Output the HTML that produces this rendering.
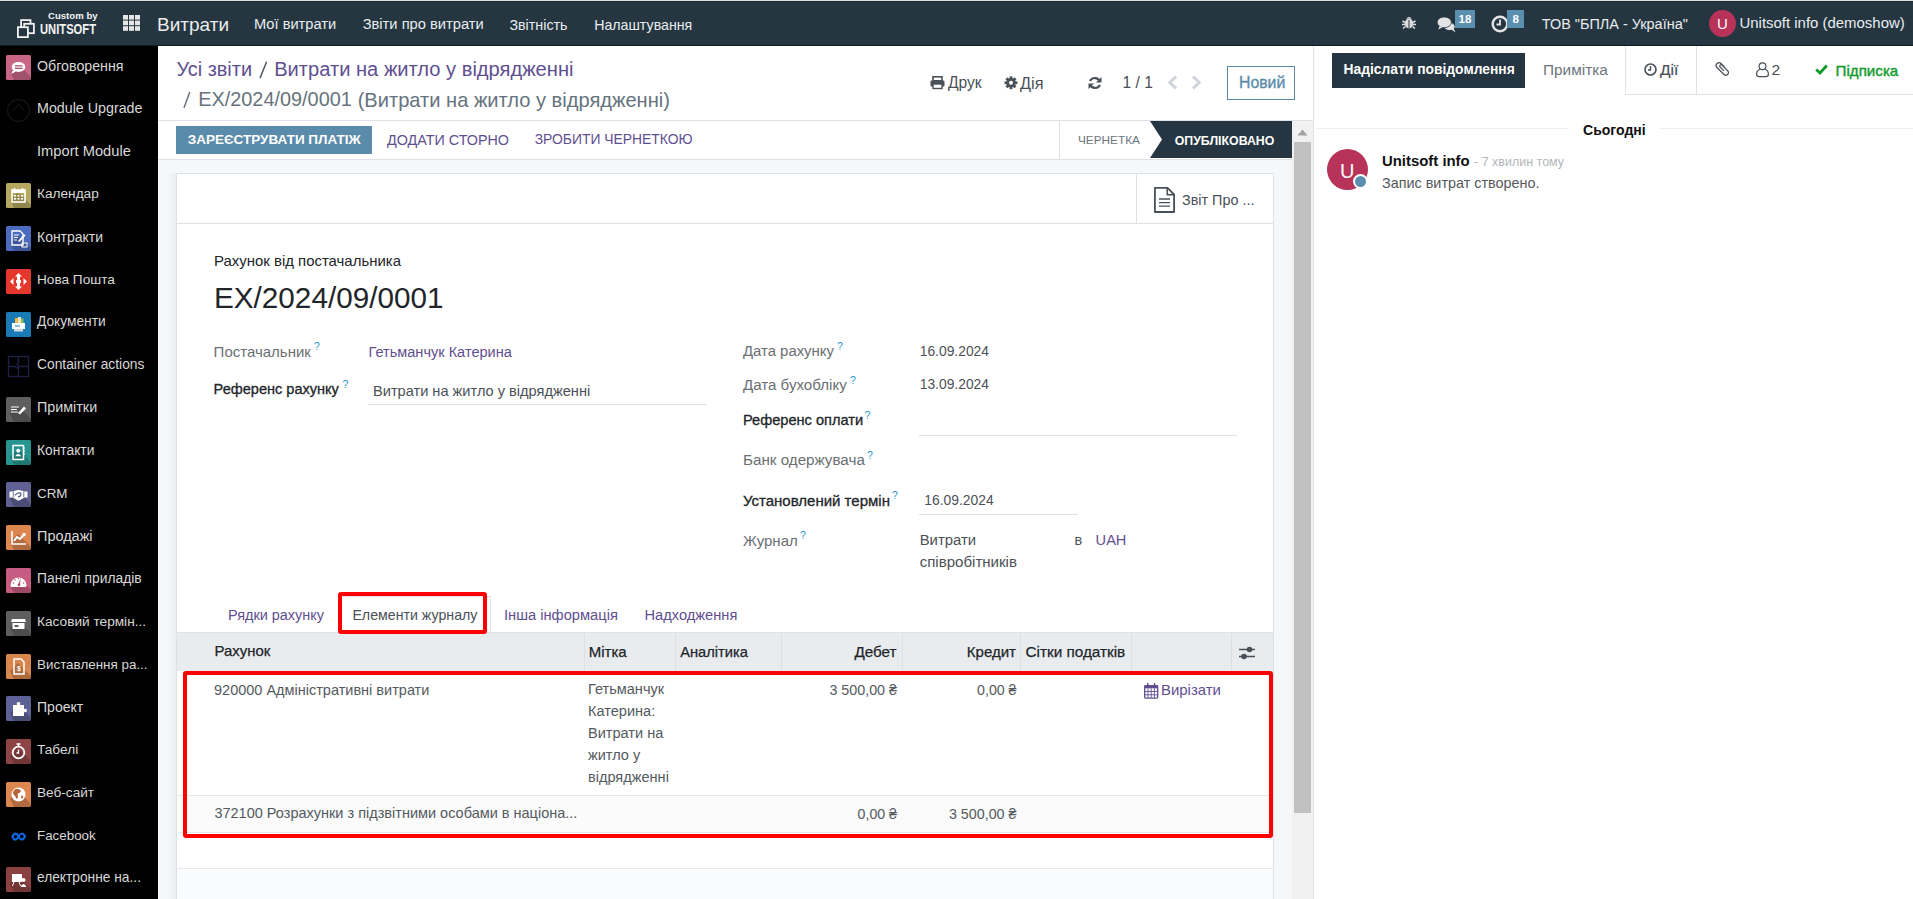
<!DOCTYPE html>
<html><head><meta charset="utf-8"><title>Витрати</title>
<style>
html,body{margin:0;padding:0;width:1913px;height:899px;overflow:hidden;background:#fff;}
body{position:relative;font-family:"Liberation Sans",sans-serif;}
.t{position:absolute;white-space:nowrap;line-height:1;}
.r{position:absolute;}
svg.r{display:block;overflow:visible;}
</style></head><body>
<div class="r" style="left:0px;top:0px;width:1913px;height:1px;background:#e0dfdd;"></div>
<div class="r" style="left:0px;top:1px;width:1913px;height:44px;background:#253641;"></div>
<div class="r" style="left:0px;top:1px;width:1913px;height:1px;background:#1c2c37;"></div>
<div class="r" style="left:0px;top:45px;width:1913px;height:1px;background:#111a20;"></div>
<div class="r" style="left:0px;top:46px;width:158px;height:853px;background:#000;"></div>
<div class="r" style="left:158px;top:46px;width:1155px;height:853px;background:#fff;"></div>
<div class="r" style="left:158px;top:120px;width:1155px;height:1px;background:#dee2e6;"></div>
<div class="r" style="left:158px;top:159px;width:1134px;height:1px;background:#dee2e6;"></div>
<div class="r" style="left:158px;top:160px;width:1134px;height:739px;background:#f6f7f9;"></div>
<div class="r" style="left:176px;top:173px;width:1098px;height:726px;background:#fff;border:1px solid #dee2e6;border-bottom:none;box-sizing:border-box;"></div>
<div class="r" style="left:166px;top:173px;width:10px;height:726px;background:linear-gradient(to right, rgba(0,0,0,0), rgba(0,0,0,0.035));"></div>
<div class="r" style="left:1292px;top:121px;width:21px;height:778px;background:#f1f1f1;"></div>
<div class="r" style="left:1294px;top:142px;width:17px;height:671px;background:#c1c1c1;"></div>
<svg class="r" style="left:1297px;top:129px;" width="11" height="7" viewBox="0 0 11 7"><path d="M0.5 6.5 L5.5 0.5 L10.5 6.5 Z" fill="#a3a3a3"/></svg>
<div class="r" style="left:1313px;top:46px;width:1px;height:853px;background:#dee2e6;"></div>
<div class="r" style="left:1314px;top:46px;width:599px;height:853px;background:#fff;"></div>
<svg class="r" style="left:16px;top:18px;" width="21" height="21" viewBox="0 0 21 21"><rect x="5.1" y="2.1" width="9.4" height="9.4" fill="#253541" stroke="#f2f2f2" stroke-width="1.8"/><rect x="8.2" y="5.8" width="9.7" height="9.4" fill="#253541" stroke="#f2f2f2" stroke-width="1.8"/><rect x="1.9" y="9.2" width="10" height="9.9" fill="#253541" stroke="#f2f2f2" stroke-width="1.8"/></svg>
<div class="t " style="top:10.87px;font-size:9.6px;color:#f4f4f4;font-weight:700;left:48.00px;">Custom by</div>
<div class="t " style="top:22.15px;font-size:14px;color:#f4f4f4;font-weight:700;left:40.00px;transform:scaleX(0.8);transform-origin:left top;">UNITSOFT</div>
<svg class="r" style="left:123px;top:15px;" width="17" height="16" viewBox="0 0 17 16"><rect x="0" y="0.0" width="5" height="4.6" fill="#e6e6e6"/><rect x="6" y="0.0" width="5" height="4.6" fill="#e6e6e6"/><rect x="12" y="0.0" width="5" height="4.6" fill="#e6e6e6"/><rect x="0" y="5.6" width="5" height="4.6" fill="#e6e6e6"/><rect x="6" y="5.6" width="5" height="4.6" fill="#e6e6e6"/><rect x="12" y="5.6" width="5" height="4.6" fill="#e6e6e6"/><rect x="0" y="11.2" width="5" height="4.6" fill="#e6e6e6"/><rect x="6" y="11.2" width="5" height="4.6" fill="#e6e6e6"/><rect x="12" y="11.2" width="5" height="4.6" fill="#e6e6e6"/></svg>
<div class="t " style="top:14.92px;font-size:19px;color:#ececec;left:157.00px;">Витрати</div>
<div class="t " style="top:17.40px;font-size:14.65px;color:#e9ecef;left:254.00px;">Мої витрати</div>
<div class="t " style="top:17.36px;font-size:14.7px;color:#e9ecef;left:362.70px;">Звіти про витрати</div>
<div class="t " style="top:17.70px;font-size:14.3px;color:#e9ecef;left:509.40px;">Звітність</div>
<div class="t " style="top:17.78px;font-size:14.2px;color:#e9ecef;left:594.20px;">Налаштування</div>
<svg class="r" style="left:1402px;top:15px;" width="14" height="14" viewBox="0 0 14 14"><ellipse cx="7" cy="8.5" rx="4.2" ry="5" fill="#dcdcdc"/><path d="M4 3.5 Q7 0.5 10 3.5 Z" fill="#dcdcdc"/><path d="M0.5 6 L3 7.5 M13.5 6 L11 7.5 M0 9.5 H3 M14 9.5 H11 M1 13.5 L3.5 11.5 M13 13.5 L10.5 11.5" stroke="#dcdcdc" stroke-width="1.6"/><path d="M7 5 V13.5" stroke="#253541" stroke-width="1"/></svg>
<svg class="r" style="left:1437px;top:16px;" width="19" height="17" viewBox="0 0 19 17"><ellipse cx="12.5" cy="10.5" rx="5.8" ry="4.3" fill="#e4e4e4" stroke="#253541" stroke-width="1.2"/><path d="M14.5 13.5 L18.5 16.5 L16.5 12 Z" fill="#e4e4e4"/><ellipse cx="7.3" cy="6.3" rx="7.1" ry="5.4" fill="#e4e4e4" stroke="#253541" stroke-width="0.8"/><path d="M2.5 10 L1.3 13.5 L6 11 Z" fill="#e4e4e4"/></svg>
<div class="r" style="left:1455px;top:9.5px;width:20px;height:18px;background:#5b8fb0;"></div>
<div class="t " style="top:13.77px;font-size:11.5px;color:#fff;font-weight:700;left:1458.50px;">18</div>
<svg class="r" style="left:1491px;top:15px;" width="18" height="18" viewBox="0 0 18 18"><circle cx="9" cy="9" r="7.3" fill="none" stroke="#e6e6e6" stroke-width="2.4"/><path d="M9 4.5 V9.5 H5.5" fill="none" stroke="#e6e6e6" stroke-width="1.8"/></svg>
<div class="r" style="left:1507px;top:9.5px;width:17px;height:18px;background:#5b8fb0;"></div>
<div class="t " style="top:13.77px;font-size:11.5px;color:#fff;font-weight:700;left:1512.50px;">8</div>
<div class="t " style="top:16.77px;font-size:14.45px;color:#e9ecef;left:1541.80px;">ТОВ "БПЛА - Україна"</div>
<div class="r" style="left:1709px;top:10px;width:27px;height:27px;background:#b7335a;border-radius:50%;"></div>
<div class="t " style="top:16.30px;font-size:15px;color:#fff;left:1717.00px;">U</div>
<div class="t " style="top:16.34px;font-size:14.95px;color:#e9ecef;left:1739.50px;">Unitsoft info (demoshow)</div>
<svg class="r" style="left:6px;top:55px;" width="25" height="25" viewBox="0 0 25 25"><rect width="25" height="25" rx="1.5" fill="#c96686"/><path d="M4 17 L12 9 L25 22 L25 25 L8 25 Z" fill="rgba(0,0,0,0.2)"/><ellipse cx="12.5" cy="12" rx="6.8" ry="5" fill="#fff"/><path d="M7 15 L5 19 L10 16.5 Z" fill="#fff"/><rect x="9" y="10.2" width="7.5" height="1.3" fill="#a3566f"/><rect x="9" y="12.7" width="7.5" height="1.3" fill="#a3566f"/></svg>
<div class="t " style="top:58.56px;font-size:14.22px;color:#d8d8d8;left:37.00px;">Обговорення</div>
<svg class="r" style="left:6px;top:98px;" width="25" height="25" viewBox="0 0 25 25"><circle cx="12.5" cy="12.5" r="11" fill="none" stroke="#121212" stroke-width="1.5"/><path d="M6 13 L12.5 6.5 L19 13" fill="none" stroke="#121212" stroke-width="1.2"/></svg>
<div class="t " style="top:101.26px;font-size:14.28px;color:#d8d8d8;left:37.00px;">Module Upgrade</div>
<div class="t " style="top:143.66px;font-size:14.7px;color:#d8d8d8;left:37.00px;">Import Module</div>
<svg class="r" style="left:6px;top:183px;" width="25" height="25" viewBox="0 0 25 25"><rect width="25" height="25" rx="1.5" fill="#b6a85e"/><path d="M4 17 L12 9 L25 22 L25 25 L8 25 Z" fill="rgba(0,0,0,0.2)"/><rect x="6" y="7" width="13" height="12" fill="none" stroke="#fff" stroke-width="1.6"/><rect x="6" y="7" width="13" height="3" fill="#fff"/><path d="M8.5 5 V8 M16.5 5 V8" stroke="#fff" stroke-width="1.5"/><g fill="#fff"><rect x="8" y="12" width="2" height="1.6"/><rect x="11.5" y="12" width="2" height="1.6"/><rect x="15" y="12" width="2" height="1.6"/><rect x="8" y="15" width="2" height="1.6"/><rect x="11.5" y="15" width="2" height="1.6"/><rect x="15" y="15" width="2" height="1.6"/></g></svg>
<div class="t " style="top:187.28px;font-size:13.67px;color:#d8d8d8;left:37.00px;">Календар</div>
<svg class="r" style="left:6px;top:226px;" width="25" height="25" viewBox="0 0 25 25"><rect width="25" height="25" rx="1.5" fill="#4b6bbf"/><path d="M4 17 L12 9 L25 22 L25 25 L8 25 Z" fill="rgba(0,0,0,0.2)"/><path d="M6 5 H14 L17 8 V19 H6 Z" fill="none" stroke="#fff" stroke-width="1.4"/><path d="M8 9 H13 M8 11.5 H12 M8 14 H11" stroke="#fff" stroke-width="1"/><path d="M12 15 L18 8 L19.5 9.5 L13.5 16 Z" fill="#fff"/><rect x="16" y="17" width="5" height="4" fill="none" stroke="#fff" stroke-width="1"/></svg>
<div class="t " style="top:229.77px;font-size:13.98px;color:#d8d8d8;left:37.00px;">Контракти</div>
<svg class="r" style="left:6px;top:269px;" width="25" height="25" viewBox="0 0 25 25"><rect width="25" height="25" rx="1.5" fill="#e5372c"/><path d="M12.5 4 L16 7.5 H14 V11 H11 V7.5 H9 Z M12.5 21 L9 17.5 H11 V14 H14 V17.5 H16 Z M4 12.5 L7.5 9 V16 Z M21 12.5 L17.5 9 V16 Z" fill="#fff"/><rect x="10" y="11" width="5" height="3" fill="#fff"/></svg>
<div class="t " style="top:272.80px;font-size:13.64px;color:#d8d8d8;left:37.00px;">Нова Пошта</div>
<svg class="r" style="left:6px;top:312px;" width="25" height="25" viewBox="0 0 25 25"><rect width="25" height="25" rx="1.5" fill="#1a7ab5"/><rect x="9" y="6" width="3" height="6" fill="#f4b942"/><rect x="12" y="5" width="3" height="7" fill="#e7e2d5"/><rect x="15" y="6.5" width="2.5" height="5.5" fill="#8bc34a"/><rect x="6" y="11" width="13" height="6" fill="#fff"/><rect x="8" y="17" width="9" height="2.5" fill="#cfd8dc"/><rect x="9" y="13.5" width="5" height="1" fill="#1a7ab5"/></svg>
<div class="t " style="top:315.45px;font-size:13.76px;color:#d8d8d8;left:37.00px;">Документи</div>
<svg class="r" style="left:6px;top:354px;" width="25" height="25" viewBox="0 0 25 25"><rect x="2.5" y="2.5" width="20" height="20" fill="none" stroke="#1d2044" stroke-width="1.4"/><path d="M12.5 2.5 V9 Q9.5 10 12.5 12.5 V22.5 M2.5 12.5 H9 Q10 15.5 12.5 12.5 H22.5" fill="none" stroke="#1d2044" stroke-width="1.4"/></svg>
<div class="t " style="top:358.16px;font-size:13.81px;color:#d8d8d8;left:37.00px;">Container actions</div>
<svg class="r" style="left:6px;top:397px;" width="25" height="25" viewBox="0 0 25 25"><rect width="25" height="25" rx="1.5" fill="#5f5f5f"/><path d="M4 17 L12 9 L25 22 L25 25 L8 25 Z" fill="rgba(0,0,0,0.2)"/><path d="M5 10 H13 M5 12.5 H11 M5 15 H12" stroke="#fff" stroke-width="1.2"/><path d="M12 16 L18 9.5 L20 11.5 L14 17.5 Z" fill="#fff"/></svg>
<div class="t " style="top:400.47px;font-size:14.33px;color:#d8d8d8;left:37.00px;">Примітки</div>
<svg class="r" style="left:6px;top:440px;" width="25" height="25" viewBox="0 0 25 25"><rect width="25" height="25" rx="1.5" fill="#27958f"/><path d="M4 17 L12 9 L25 22 L25 25 L8 25 Z" fill="rgba(0,0,0,0.2)"/><rect x="7" y="5.5" width="10.5" height="14" fill="none" stroke="#fff" stroke-width="1.5"/><circle cx="12.2" cy="10.8" r="2" fill="#fff"/><path d="M9 16.2 Q12.2 11.8 15.4 16.2 Z" fill="#fff"/><path d="M17 8 H19 M17 11 H19 M17 14 H19" stroke="#fff" stroke-width="1.1"/></svg>
<div class="t " style="top:443.66px;font-size:13.81px;color:#d8d8d8;left:37.00px;">Контакти</div>
<svg class="r" style="left:6px;top:482px;" width="25" height="25" viewBox="0 0 25 25"><rect width="25" height="25" rx="1.5" fill="#5e6192"/><path d="M4 17 L12 9 L25 22 L25 25 L8 25 Z" fill="rgba(0,0,0,0.2)"/><path d="M3.5 9.5 H7 L10.5 8.3 Q12.5 7.6 14.5 8.3 L18 9.5 H21.5 V15.5 H18.5 L13.8 18.3 Q12.3 19 11 18 L6.8 15.5 H3.5 Z" fill="#fff"/><path d="M9 13.3 Q11.5 9.8 14.8 11.2 Q15.5 14.5 12 14.8" fill="none" stroke="#5e6192" stroke-width="1.3"/><path d="M7.3 9.8 V15.2 M17.8 9.8 V15.2" stroke="#5e6192" stroke-width="0.9"/></svg>
<div class="t " style="top:486.75px;font-size:13.41px;color:#d8d8d8;left:37.00px;">CRM</div>
<svg class="r" style="left:6px;top:525px;" width="25" height="25" viewBox="0 0 25 25"><rect width="25" height="25" rx="1.5" fill="#de8650"/><path d="M4 17 L12 9 L25 22 L25 25 L8 25 Z" fill="rgba(0,0,0,0.2)"/><path d="M6 6 V19 H20" fill="none" stroke="#fff" stroke-width="1.6"/><path d="M8 16 L11 12 L14 14 L18.5 9" fill="none" stroke="#fff" stroke-width="2"/><path d="M16 8 H19.5 V11.5 Z" fill="#fff"/></svg>
<div class="t " style="top:528.60px;font-size:14.47px;color:#d8d8d8;left:37.00px;">Продажі</div>
<svg class="r" style="left:6px;top:568px;" width="25" height="25" viewBox="0 0 25 25"><rect width="25" height="25" rx="1.5" fill="#c85b82"/><path d="M4 17 L12 9 L25 22 L25 25 L8 25 Z" fill="rgba(0,0,0,0.2)"/><path d="M4.5 17.5 A8 8 0 0 1 20.5 17.5 Q20.5 19 19 19 H6 Q4.5 19 4.5 17.5 Z" fill="#fff"/><path d="M12 17.5 L14.8 9.5 L13.8 17.8 Z" fill="#a84a6a"/><circle cx="13" cy="17" r="1.3" fill="#a84a6a"/><g fill="#c85b82"><circle cx="7.5" cy="15" r="0.8"/><circle cx="9" cy="11.8" r="0.8"/><circle cx="12.5" cy="10.5" r="0.8"/><circle cx="17.5" cy="15" r="0.8"/></g></svg>
<div class="t " style="top:571.89px;font-size:13.83px;color:#d8d8d8;left:37.00px;">Панелі приладів</div>
<svg class="r" style="left:6px;top:611px;" width="25" height="25" viewBox="0 0 25 25"><rect width="25" height="25" rx="1.5" fill="#5f5f5f"/><path d="M4 17 L12 9 L25 22 L25 25 L8 25 Z" fill="rgba(0,0,0,0.2)"/><path d="M6 8 H19 L20 11 H5 Z" fill="#fff"/><rect x="6.5" y="12" width="12" height="6" fill="#fff"/><rect x="8.5" y="14" width="4" height="2" fill="#5f5f5f"/></svg>
<div class="t " style="top:614.79px;font-size:13.66px;color:#d8d8d8;left:37.00px;">Касовий термін...</div>
<svg class="r" style="left:6px;top:654px;" width="25" height="25" viewBox="0 0 25 25"><rect width="25" height="25" rx="1.5" fill="#d9864d"/><path d="M4 17 L12 9 L25 22 L25 25 L8 25 Z" fill="rgba(0,0,0,0.2)"/><path d="M8 5 H15 L18 8 V20 H8 Z" fill="none" stroke="#fff" stroke-width="1.5"/><text x="13" y="16.5" font-size="7" font-family="Liberation Sans" font-weight="700" fill="#fff" text-anchor="middle">$</text></svg>
<div class="t " style="top:657.75px;font-size:13.41px;color:#d8d8d8;left:37.00px;">Виставлення ра...</div>
<svg class="r" style="left:6px;top:696px;" width="25" height="25" viewBox="0 0 25 25"><rect width="25" height="25" rx="1.5" fill="#5c6295"/><path d="M4 17 L12 9 L25 22 L25 25 L8 25 Z" fill="rgba(0,0,0,0.2)"/><path d="M7 9 H11 Q10 6 12.5 6 Q15 6 14 9 H18 V13 Q21 12 21 14.5 Q21 17 18 16 V20 H7 Z" fill="#fff"/></svg>
<div class="t " style="top:699.97px;font-size:14.04px;color:#d8d8d8;left:37.00px;">Проект</div>
<svg class="r" style="left:6px;top:739px;" width="25" height="25" viewBox="0 0 25 25"><rect width="25" height="25" rx="1.5" fill="#8d4444"/><path d="M4 17 L12 9 L25 22 L25 25 L8 25 Z" fill="rgba(0,0,0,0.2)"/><circle cx="12.5" cy="13.5" r="5.8" fill="none" stroke="#fff" stroke-width="1.8"/><path d="M10.5 5 H14.5 M12.5 5 V7.5 M12.5 10.5 V14 H10.5" fill="none" stroke="#fff" stroke-width="1.4"/></svg>
<div class="t " style="top:743.01px;font-size:13.69px;color:#d8d8d8;left:37.00px;">Табелі</div>
<svg class="r" style="left:6px;top:782px;" width="25" height="25" viewBox="0 0 25 25"><rect width="25" height="25" rx="1.5" fill="#de8650"/><path d="M4 17 L12 9 L25 22 L25 25 L8 25 Z" fill="rgba(0,0,0,0.2)"/><circle cx="12.5" cy="12.5" r="7" fill="#fff"/><path d="M9.5 7 Q13 6.5 14.5 8 Q15.5 10 13 11 Q11 11.5 12 14 Q12.5 16 10.5 17 Q9.5 14 8 13 Q6 11 7.5 9 Z" fill="#b9653a"/><path d="M15.5 13 Q17.5 13.5 17 16 Q15.5 17.5 15 15.5 Z" fill="#b9653a"/></svg>
<div class="t " style="top:785.81px;font-size:13.63px;color:#d8d8d8;left:37.00px;">Веб-сайт</div>
<svg class="r" style="left:6px;top:824px;" width="25" height="25" viewBox="0 0 25 25"><path d="M6.5 13 Q9 6.5 12.5 12.5 Q16 18.5 19 12.5 Q16 6.5 12.5 12.5 Q9 18.5 6.5 13 Z" fill="none" stroke="#0a66e4" stroke-width="2.2"/></svg>
<div class="t " style="top:828.78px;font-size:13.37px;color:#d8d8d8;left:37.00px;">Facebook</div>
<svg class="r" style="left:6px;top:867px;" width="25" height="25" viewBox="0 0 25 25"><rect width="25" height="25" rx="1.5" fill="#8c4141"/><path d="M4 17 L12 9 L25 22 L25 25 L8 25 Z" fill="rgba(0,0,0,0.2)"/><rect x="6" y="7" width="10" height="8" fill="#fff"/><path d="M8 15 L6.5 19 M13 15 L14.5 19" stroke="#fff" stroke-width="1"/><circle cx="17.5" cy="13" r="2" fill="#fff"/><path d="M14.5 20 Q17.5 14 20.5 20 Z" fill="#fff"/></svg>
<div class="t " style="top:871.20px;font-size:13.76px;color:#d8d8d8;left:37.00px;">електронне на...</div>
<div class="t " style="top:59.93px;font-size:19.93px;color:#5f4f91;left:176.40px;">Усі звіти</div>
<svg class="r" style="left:255px;top:58px;" width="16" height="24" viewBox="0 0 16 24"><path d="M5.2 19.6 L11.4 4.2" stroke="#4f5a64" stroke-width="1.5" stroke-linecap="round"/></svg>
<div class="t " style="top:58.96px;font-size:20.13px;color:#5f4f91;left:274.20px;">Витрати на житло у відрядженні</div>
<svg class="r" style="left:180px;top:88px;" width="14" height="24" viewBox="0 0 14 24"><path d="M4.2 19.3 L9.6 4.6" stroke="#66737e" stroke-width="1.5" stroke-linecap="round"/></svg>
<div class="t " style="top:89.76px;font-size:19.89px;color:#66737e;left:198.20px;">EX/2024/09/0001</div>
<div class="t " style="top:89.59px;font-size:20.09px;color:#66737e;left:357.70px;">(Витрати на житло у відрядженні)</div>
<svg class="r" style="left:930px;top:76px;" width="15" height="13" viewBox="0 0 15 13"><rect x="3" y="0.8" width="9" height="4" fill="none" stroke="#495057" stroke-width="1.6"/><rect x="0.5" y="4.5" width="14" height="6" rx="1" fill="#495057"/><rect x="3" y="8" width="9" height="4.5" fill="#fff" stroke="#495057" stroke-width="1.4"/></svg>
<div class="t " style="top:75.29px;font-size:15.6px;color:#495057;left:948.00px;">Друк</div>
<svg class="r" style="left:1004px;top:76px;" width="14" height="14" viewBox="0 0 14 14"><g transform="translate(7 6.8)"><rect x="-1.4" y="-6.4" width="2.8" height="3" transform="rotate(0)" fill="#495057"/><rect x="-1.4" y="-6.4" width="2.8" height="3" transform="rotate(45)" fill="#495057"/><rect x="-1.4" y="-6.4" width="2.8" height="3" transform="rotate(90)" fill="#495057"/><rect x="-1.4" y="-6.4" width="2.8" height="3" transform="rotate(135)" fill="#495057"/><rect x="-1.4" y="-6.4" width="2.8" height="3" transform="rotate(180)" fill="#495057"/><rect x="-1.4" y="-6.4" width="2.8" height="3" transform="rotate(225)" fill="#495057"/><rect x="-1.4" y="-6.4" width="2.8" height="3" transform="rotate(270)" fill="#495057"/><rect x="-1.4" y="-6.4" width="2.8" height="3" transform="rotate(315)" fill="#495057"/><circle r="4.7" fill="#495057"/><circle r="2" fill="#fff"/></g></svg>
<div class="t " style="top:74.70px;font-size:16.3px;color:#495057;left:1020.00px;">Дія</div>
<svg class="r" style="left:1088px;top:76px;" width="14" height="14" viewBox="0 0 14 14"><path d="M12 5.5 A5.5 5.5 0 0 0 2 5" fill="none" stroke="#495057" stroke-width="2.2"/><path d="M13.5 1 V6.5 H8 Z" fill="#495057"/><path d="M2 8.5 A5.5 5.5 0 0 0 12 9" fill="none" stroke="#495057" stroke-width="2.2"/><path d="M0.5 13 V7.5 H6 Z" fill="#495057"/></svg>
<div class="t " style="top:74.99px;font-size:15.6px;color:#495057;left:1122.50px;">1 / 1</div>
<svg class="r" style="left:1167px;top:75px;" width="11" height="15" viewBox="0 0 11 15"><path d="M9 1.5 L2.8 7.5 L9 13.5" fill="none" stroke="#ced4da" stroke-width="3"/></svg>
<svg class="r" style="left:1191px;top:75px;" width="11" height="15" viewBox="0 0 11 15"><path d="M2 1.5 L8.2 7.5 L2 13.5" fill="none" stroke="#ced4da" stroke-width="3"/></svg>
<div class="r" style="left:1227px;top:66px;width:68px;height:34px;background:#fff;border:1px solid #5b8baa;box-sizing:border-box;"></div>
<div class="t " style="top:75.13px;font-size:15.8px;color:#5b8baa;left:1239.00px;-webkit-text-stroke:0.35px currentColor;">Новий</div>
<div class="r" style="left:176px;top:126px;width:196px;height:28px;background:#5b8baa;"></div>
<div class="t " style="top:133.27px;font-size:13.5px;color:#fff;font-weight:700;left:187.80px;">ЗАРЕЄСТРУВАТИ ПЛАТІЖ</div>
<div class="t " style="top:132.85px;font-size:14.35px;color:#5f4f91;left:387.00px;">ДОДАТИ СТОРНО</div>
<div class="t " style="top:133.23px;font-size:13.9px;color:#5f4f91;left:534.70px;">ЗРОБИТИ ЧЕРНЕТКОЮ</div>
<div class="r" style="left:1059px;top:121px;width:1px;height:38px;background:#dee2e6;"></div>
<div class="t " style="top:135.01px;font-size:11.8px;color:#6c757d;left:1078.00px;">ЧЕРНЕТКА</div>
<svg class="r" style="left:1150px;top:121px;" width="142" height="37" viewBox="0 0 142 37"><path d="M0 0 H142 V37 H0 L12 18.5 Z" fill="#253541"/></svg>
<div class="t " style="top:134.55px;font-size:12.35px;color:#fff;font-weight:700;left:1174.70px;">ОПУБЛІКОВАНО</div>
<div class="r" style="left:177px;top:223px;width:1096px;height:1px;background:#dee2e6;"></div>
<div class="r" style="left:1136px;top:174px;width:1px;height:49px;background:#dee2e6;"></div>
<svg class="r" style="left:1154px;top:187px;" width="21" height="26" viewBox="0 0 21 26"><path d="M0.9 0.9 H13.5 L20.1 7.5 V25 H0.9 Z" fill="none" stroke="#495057" stroke-width="1.8" stroke-linejoin="round"/><path d="M13.2 1 V7.8 H20" fill="none" stroke="#495057" stroke-width="1.5"/><path d="M5 12 H16 M5 15.6 H16 M5 19.2 H16" stroke="#495057" stroke-width="1.3"/></svg>
<div class="t " style="top:193.11px;font-size:14.4px;color:#495057;left:1182.00px;">Звіт Про ...</div>
<div class="t " style="top:254.34px;font-size:14.95px;color:#212529;left:214.00px;">Рахунок від постачальника</div>
<div class="t " style="top:283.16px;font-size:29.7px;color:#212529;left:214.00px;">EX/2024/09/0001</div>
<div class="t " style="top:343.70px;font-size:15.0px;color:#6b6f73;left:213.60px;">Постачальник</div>
<div class="t " style="top:340.61px;font-size:10.5px;color:#1f9bcf;left:314.00px;">?</div>
<div class="t " style="top:344.68px;font-size:14.55px;color:#5f4f91;left:368.50px;">Гетьманчук Катерина</div>
<div class="t " style="top:382.08px;font-size:14.55px;color:#212529;left:213.60px;-webkit-text-stroke:0.3px currentColor;">Референс рахунку</div>
<div class="t " style="top:378.61px;font-size:10.5px;color:#1f9bcf;left:342.50px;">?</div>
<div class="t " style="top:383.64px;font-size:14.6px;color:#4b5157;left:373.00px;">Витрати на житло у відрядженні</div>
<div class="r" style="left:368px;top:404px;width:339px;height:1px;background:#dee2e6;"></div>
<div class="t " style="top:343.79px;font-size:14.9px;color:#6b6f73;left:743.00px;">Дата рахунку</div>
<div class="t " style="top:340.61px;font-size:10.5px;color:#1f9bcf;left:837.00px;">?</div>
<div class="t " style="top:344.68px;font-size:13.85px;color:#4b5157;left:919.70px;">16.09.2024</div>
<div class="t " style="top:377.02px;font-size:15.1px;color:#6b6f73;left:743.00px;">Дата бухобліку</div>
<div class="t " style="top:374.61px;font-size:10.5px;color:#1f9bcf;left:850.00px;">?</div>
<div class="t " style="top:378.28px;font-size:13.85px;color:#4b5157;left:919.70px;">13.09.2024</div>
<div class="t " style="top:412.64px;font-size:14.6px;color:#212529;left:743.00px;-webkit-text-stroke:0.3px currentColor;">Референс оплати</div>
<div class="t " style="top:409.61px;font-size:10.5px;color:#1f9bcf;left:864.50px;">?</div>
<div class="r" style="left:919px;top:435px;width:318px;height:1px;background:#dee2e6;"></div>
<div class="t " style="top:452.43px;font-size:15.2px;color:#6b6f73;left:743.00px;">Банк одержувача</div>
<div class="t " style="top:449.61px;font-size:10.5px;color:#1f9bcf;left:867.00px;">?</div>
<div class="t " style="top:492.50px;font-size:15.0px;color:#212529;left:743.00px;-webkit-text-stroke:0.3px currentColor;">Установлений термін</div>
<div class="t " style="top:489.61px;font-size:10.5px;color:#1f9bcf;left:892.00px;">?</div>
<div class="t " style="top:493.78px;font-size:13.85px;color:#4b5157;left:924.30px;">16.09.2024</div>
<div class="r" style="left:919px;top:514px;width:159px;height:1px;background:#dee2e6;"></div>
<div class="t " style="top:532.50px;font-size:15.0px;color:#6b6f73;left:743.00px;">Журнал</div>
<div class="t " style="top:529.61px;font-size:10.5px;color:#1f9bcf;left:800.00px;">?</div>
<div class="t " style="top:532.59px;font-size:14.9px;color:#4b5157;left:919.70px;">Витрати</div>
<div class="t " style="top:553.86px;font-size:15.05px;color:#4b5157;left:919.70px;">співробітників</div>
<div class="t " style="top:532.93px;font-size:14.5px;color:#4b5157;left:1074.60px;">в</div>
<div class="t " style="top:533.14px;font-size:14.6px;color:#5f4f91;left:1095.60px;">UAH</div>
<div class="t " style="top:607.77px;font-size:14.45px;color:#5f4f91;left:228.00px;">Рядки рахунку</div>
<div class="r" style="left:338px;top:596px;width:153px;height:37px;background:#fff;border:1px solid #dee2e6;border-bottom:none;box-sizing:border-box;"></div>
<div class="t " style="top:607.98px;font-size:14.2px;color:#495057;left:352.40px;">Елементи журналу</div>
<div class="t " style="top:607.56px;font-size:14.7px;color:#5f4f91;left:504.00px;">Інша інформація</div>
<div class="t " style="top:607.60px;font-size:14.65px;color:#5f4f91;left:644.50px;">Надходження</div>
<div class="r" style="left:177px;top:632px;width:1096px;height:39px;background:#e9ecef;border-top:1px solid #dee2e6;box-sizing:border-box;"></div>
<div class="r" style="left:584px;top:633px;width:1px;height:38px;background:#dde1e5;"></div>
<div class="r" style="left:675px;top:633px;width:1px;height:38px;background:#dde1e5;"></div>
<div class="r" style="left:781px;top:633px;width:1px;height:38px;background:#dde1e5;"></div>
<div class="r" style="left:902px;top:633px;width:1px;height:38px;background:#dde1e5;"></div>
<div class="r" style="left:1020px;top:633px;width:1px;height:38px;background:#dde1e5;"></div>
<div class="r" style="left:1131px;top:633px;width:1px;height:38px;background:#dde1e5;"></div>
<div class="r" style="left:1231px;top:633px;width:1px;height:38px;background:#dde1e5;"></div>
<div class="t " style="top:644.34px;font-size:14.95px;color:#212529;left:214.60px;-webkit-text-stroke:0.25px currentColor;">Рахунок</div>
<div class="t " style="top:644.30px;font-size:15.0px;color:#212529;left:588.70px;-webkit-text-stroke:0.25px currentColor;">Мітка</div>
<div class="t " style="top:644.56px;font-size:14.7px;color:#212529;left:680.20px;-webkit-text-stroke:0.25px currentColor;">Аналітика</div>
<div class="t " style="top:644.13px;font-size:15.2px;color:#212529;right:1016.60px;text-align:right;-webkit-text-stroke:0.25px currentColor;">Дебет</div>
<div class="t " style="top:644.26px;font-size:15.05px;color:#212529;right:897.00px;text-align:right;-webkit-text-stroke:0.25px currentColor;">Кредит</div>
<div class="t " style="top:644.05px;font-size:15.3px;color:#212529;left:1025.50px;-webkit-text-stroke:0.25px currentColor;">Сітки податків</div>
<svg class="r" style="left:1239px;top:646px;" width="16" height="14" viewBox="0 0 16 14"><path d="M0 3.5 H16 M0 10.5 H16" stroke="#495057" stroke-width="1.6"/><circle cx="10.5" cy="3.5" r="2.8" fill="#495057"/><circle cx="5" cy="10.5" r="2.8" fill="#495057"/></svg>
<div class="r" style="left:178px;top:795px;width:1095px;height:1px;background:#e6e9ec;"></div>
<div class="r" style="left:178px;top:796px;width:1095px;height:36px;background:#fbfbfc;"></div>
<div class="r" style="left:178px;top:832px;width:1095px;height:1px;background:#e6e9ec;"></div>
<div class="r" style="left:178px;top:868px;width:1095px;height:1px;background:#e6e9ec;"></div>
<div class="r" style="left:177px;top:869px;width:1096px;height:30px;background:#fafbfc;"></div>
<div class="t " style="top:682.53px;font-size:14.5px;color:#535a60;left:214.00px;">920000 Адміністративні витрати</div>
<div class="t " style="top:682.28px;font-size:14.55px;color:#535a60;left:588.00px;">Гетьманчук</div>
<div class="t " style="top:704.28px;font-size:14.55px;color:#535a60;left:588.00px;">Катерина:</div>
<div class="t " style="top:726.28px;font-size:14.55px;color:#535a60;left:588.00px;">Витрати на</div>
<div class="t " style="top:748.28px;font-size:14.55px;color:#535a60;left:588.00px;">житло у</div>
<div class="t " style="top:770.28px;font-size:14.55px;color:#535a60;left:588.00px;">відрядженні</div>
<div class="t " style="top:682.90px;font-size:14.3px;color:#535a60;right:1016.00px;text-align:right;">3 500,00 ₴</div>
<div class="t " style="top:682.98px;font-size:14.2px;color:#535a60;right:896.50px;text-align:right;">0,00 ₴</div>
<svg class="r" style="left:1144px;top:683px;" width="15" height="16" viewBox="0 0 15 16"><rect x="0.7" y="2.7" width="13" height="12.4" rx="0.8" fill="none" stroke="#5f4f91" stroke-width="1.3"/><rect x="0.7" y="2.7" width="13" height="2.6" fill="#5f4f91"/><path d="M3.8 0.6 V3.6 M10.6 0.6 V3.6" stroke="#5f4f91" stroke-width="1.5" stroke-linecap="round"/><path d="M4 5.3 V15 M7.2 5.3 V15 M10.4 5.3 V15 M0.7 8.5 H13.7 M0.7 11.8 H13.7" stroke="#5f4f91" stroke-width="0.9"/></svg>
<div class="t " style="top:683.34px;font-size:14.95px;color:#5f4f91;left:1161.00px;">Вирізати</div>
<div class="t " style="top:806.33px;font-size:14.5px;color:#535a60;left:214.40px;">372100 Розрахунки з підзвітними особами в націона...</div>
<div class="t " style="top:806.58px;font-size:14.2px;color:#535a60;right:1016.00px;text-align:right;">0,00 ₴</div>
<div class="t " style="top:806.50px;font-size:14.3px;color:#535a60;right:896.50px;text-align:right;">3 500,00 ₴</div>
<div class="r" style="left:338px;top:592px;width:149px;height:42px;background:transparent;border:4px solid #fe0000;box-sizing:border-box;border-radius:3px;"></div>
<div class="r" style="left:183px;top:671px;width:1090px;height:167px;background:transparent;border:4px solid #fe0000;box-sizing:border-box;border-radius:3px;"></div>
<div class="r" style="left:1332px;top:53px;width:193px;height:35px;background:#253541;"></div>
<div class="t " style="top:63.28px;font-size:13.85px;color:#fff;font-weight:700;left:1343.50px;">Надіслати повідомлення</div>
<div class="t " style="top:61.96px;font-size:15.4px;color:#6c757d;left:1543.00px;">Примітка</div>
<div class="r" style="left:1625px;top:46px;width:1px;height:48px;background:#dee2e6;"></div>
<div class="r" style="left:1625px;top:94px;width:288px;height:1px;background:#dee2e6;"></div>
<div class="r" style="left:1696px;top:46px;width:1px;height:48px;background:#dee2e6;"></div>
<svg class="r" style="left:1644px;top:63px;" width="13" height="13" viewBox="0 0 13 13"><circle cx="6.5" cy="6.5" r="5.5" fill="none" stroke="#495057" stroke-width="1.6"/><path d="M6.5 3 V7 H4" fill="none" stroke="#495057" stroke-width="1.4"/></svg>
<div class="t " style="top:62.28px;font-size:15.5px;color:#495057;left:1660.00px;-webkit-text-stroke:0.2px currentColor;">Дії</div>
<svg class="r" style="left:1713px;top:60px;" width="19" height="19" viewBox="0 0 19 19"><g transform="translate(9.5 9) rotate(-45) scale(0.82) translate(-3.5 -10)"><path d="M7 9.5 V4 A3.5 3.5 0 0 0 0 4 V16 A3.2 3.2 0 0 0 6.4 16 V6.2 A1.6 1.6 0 0 0 3.2 6.2 V12.5" fill="none" stroke="#495057" stroke-width="1.5" stroke-linecap="round"/></g></svg>
<svg class="r" style="left:1756px;top:62px;" width="14" height="16" viewBox="0 0 14 16"><circle cx="6.5" cy="4.2" r="3.4" fill="none" stroke="#495057" stroke-width="1.2"/><path d="M3.8 7.2 Q0.6 8.5 0.6 12 Q0.6 14.7 3 14.7 H10 Q12.4 14.7 12.4 12 Q12.4 8.5 9.2 7.2" fill="none" stroke="#495057" stroke-width="1.2" stroke-linejoin="round"/></svg>
<div class="t " style="top:62.28px;font-size:15.5px;color:#495057;left:1771.50px;">2</div>
<svg class="r" style="left:1815px;top:64px;" width="13" height="11" viewBox="0 0 13 11"><path d="M1.2 5.5 L5 9 L11.8 1.5" fill="none" stroke="#109a2a" stroke-width="2.8"/></svg>
<div class="t " style="top:62.58px;font-size:15.15px;color:#109a2a;left:1835.60px;-webkit-text-stroke:0.4px currentColor;">Підписка</div>
<div class="r" style="left:1315px;top:128px;width:254px;height:1px;background:#eef0f2;"></div>
<div class="r" style="left:1659px;top:128px;width:254px;height:1px;background:#eef0f2;"></div>
<div class="t " style="top:122.61px;font-size:14.05px;color:#111;font-weight:700;left:1583.00px;">Сьогодні</div>
<div class="r" style="left:1327px;top:149.3px;width:41px;height:41px;background:#b7335a;border-radius:50%;"></div>
<div class="t " style="top:160.87px;font-size:20px;color:#fff;left:1340.00px;">U</div>
<div class="r" style="left:1352.7px;top:173.8px;width:15px;height:15px;background:#5b8fb0;border-radius:50%;border:2px solid #fff;box-sizing:border-box;"></div>
<div class="t " style="top:153.59px;font-size:14.9px;color:#111;font-weight:700;left:1382.00px;">Unitsoft info</div>
<div class="t " style="top:155.92px;font-size:12.5px;color:#b3b6b9;left:1474.00px;">- 7 хвилин тому</div>
<div class="t " style="top:176.41px;font-size:14.4px;color:#54585c;left:1382.00px;">Запис витрат створено.</div>
</body></html>
